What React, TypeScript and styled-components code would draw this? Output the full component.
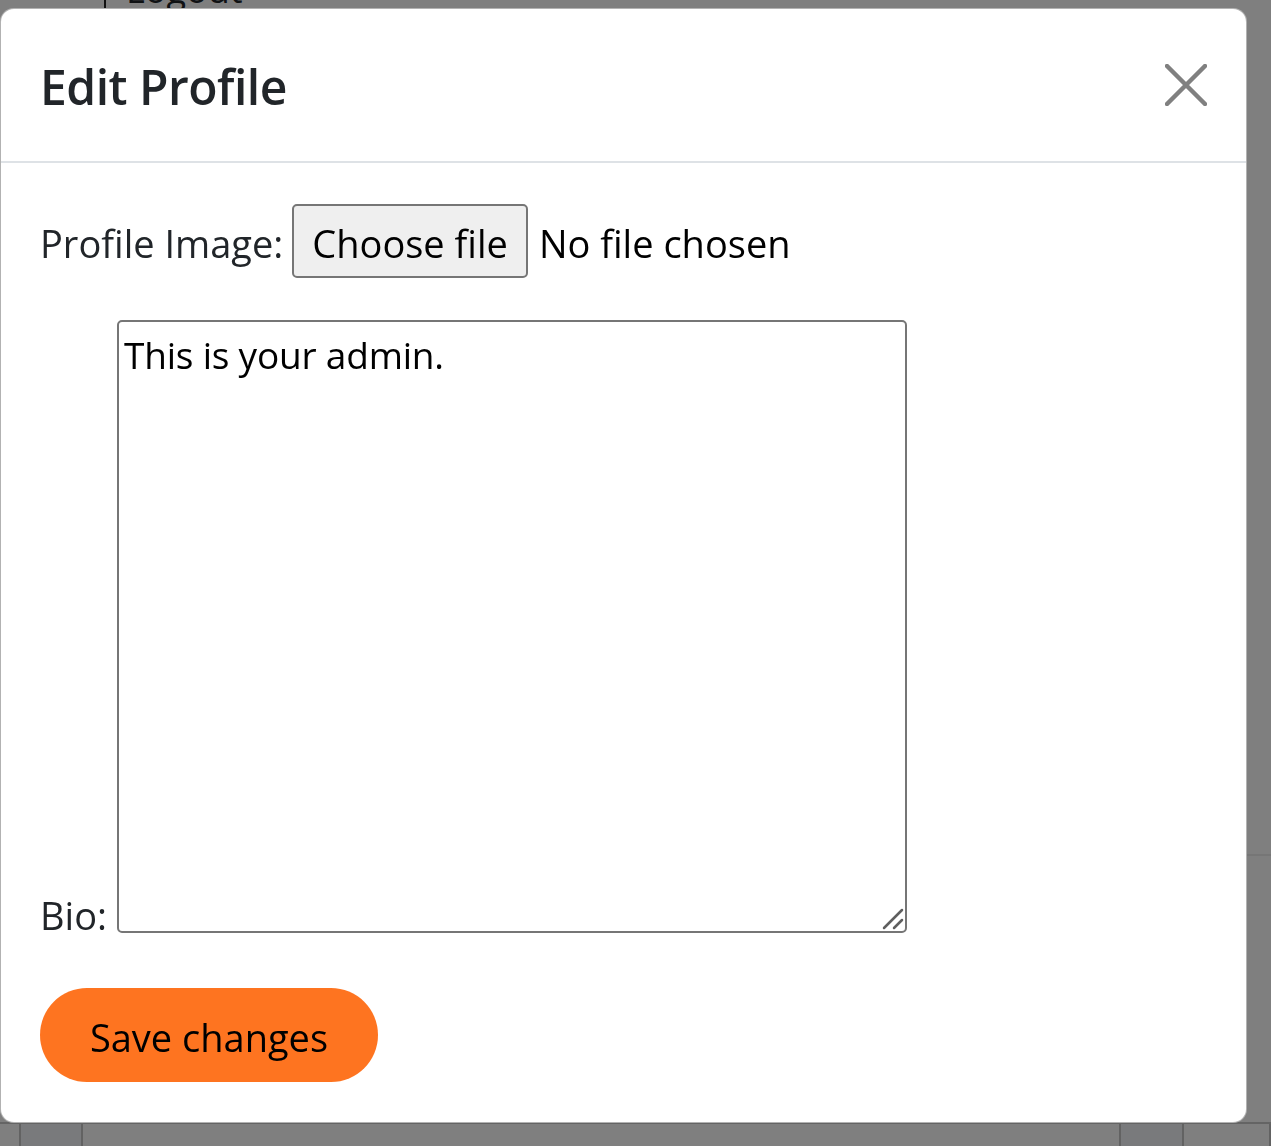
import styled, { createGlobalStyle } from 'styled-components';

const GlobalStyle = createGlobalStyle`
  html, body {
    margin: 0;
    padding: 0;
    background: #fff;
    overflow: hidden;
  }
  * {
    box-sizing: border-box;
  }
`;

const font = `"Open Sans", "Noto Sans", "Liberation Sans", sans-serif`;

// faux page behind the dialog
const Page = styled.div`
  height: 100vh;
  display: flex;
  flex-direction: column;
  justify-content: space-between;
  font-family: ${font};
  color: #212529;
`;

const TopBar = styled.div`
  display: flex;
  height: 9px;
  overflow: hidden;
`;

const TopCell = styled.div<{ width: number }>`
  width: ${p => p.width}px;
  border-right: 2px solid #222;
  line-height: 0;
`;

const LogoutText = styled.div`
  padding-left: 20px;
  font-size: 36px;
  line-height: 10px;
  margin-top: -15px;
`;

const BottomBar = styled.div`
  display: flex;
  height: 24px;
  border-top: 2px solid #c8c8c8;
`;

const BottomCell = styled.div<{ width: number; shade?: boolean }>`
  width: ${p => p.width}px;
  border-right: 2px solid #c4c4c4;
  background: ${p => (p.shade ? '#f3f5f8' : '#fff')};
`;

const Backdrop = styled.div`
  position: fixed;
  inset: 0;
  background: rgba(0, 0, 0, 0.5);
  padding-top: 8px;
`;

const SideRule = styled.div`
  position: absolute;
  right: 0;
  top: 854px;
  width: 26px;
  height: 2px;
  background: #767676;
`;

const Dialog = styled.div`
  position: relative;
  width: 1247px;
  height: 1115px;
  background: #fff;
  border: 1px solid rgba(0, 0, 0, 0.3);
  border-radius: 14px;
  display: flex;
  flex-direction: column;
  font-family: ${font};
  color: #212529;
`;

const Header = styled.div`
  height: 155px;
  display: flex;
  align-items: center;
  justify-content: space-between;
  padding: 0 38px 0 39px;
  border-bottom: 2px solid #dee2e6;
`;

const Title = styled.h5`
  margin: 0;
  font-size: 48px;
  font-weight: 600;
  letter-spacing: -0.5px;
  line-height: 1.5;
  padding-top: 4px;
`;

const CloseButton = styled.button`
  width: 44px;
  height: 44px;
  padding: 0;
  border: none;
  background: transparent;
  display: flex;
  align-items: center;
  justify-content: center;
  cursor: pointer;
`;

const Body = styled.form`
  padding: 41px 39px 40px;
  display: flex;
  flex-direction: column;
  gap: 42px;
  font-size: 38px;
`;

const FieldRow = styled.div`
  display: flex;
  align-items: center;
`;

const Label = styled.label`
  line-height: 1.5;
  margin-right: 9px;
  padding-top: 4px;
`;

const FileButton = styled.span`
  display: inline-flex;
  align-items: center;
  height: 74px;
  padding: 4px 18px 0 18px;
  background: #efefef;
  border: 2px solid #767676;
  border-radius: 5px;
  color: #000;
  margin-right: 11px;
`;

const FileName = styled.span`
  color: #000;
  padding-top: 4px;
`;

const BioRow = styled.div`
  display: flex;
  align-items: flex-end;
`;

const BioLabel = styled.label`
  line-height: 1;
  margin-right: 10px;
  margin-bottom: -1px;
`;

const TextAreaWrap = styled.div`
  position: relative;
  width: 790px;
  height: 613px;
`;

const TextArea = styled.textarea`
  width: 100%;
  height: 100%;
  resize: none;
  border: 2px solid #767676;
  border-radius: 5px;
  padding: 11px 5px;
  font-family: ${font};
  font-size: 37px;
  line-height: 1.2;
  letter-spacing: -0.2px;
  color: #000;
  outline: none;
`;

const Grip = styled.svg`
  position: absolute;
  right: 3px;
  bottom: 3px;
`;

const SaveButton = styled.button`
  align-self: flex-start;
  width: 338px;
  height: 94px;
  margin-top: 13px;
  padding-top: 4px;
  border: none;
  border-radius: 47px;
  background: #fe7420;
  color: #000;
  font-family: ${font};
  font-size: 38px;
  cursor: pointer;
`;

export default function App() {
  return (
    <>
      <GlobalStyle />
      <Page>
        <TopBar>
          <TopCell width={106} />
          <LogoutText>Logout</LogoutText>
        </TopBar>
        <BottomBar>
          <BottomCell width={21} />
          <BottomCell width={62} shade />
          <BottomCell width={1038} />
          <BottomCell width={63} shade />
          <BottomCell width={87} />
        </BottomBar>
      </Page>
      <Backdrop>
        <SideRule />
        <Dialog role="dialog">
          <Header>
            <Title>Edit Profile</Title>
            <CloseButton aria-label="Close">
              <svg width="42" height="42" viewBox="0 0 42 42">
                <path
                  d="M2 2 L40 40 M40 2 L2 40"
                  stroke="#808080"
                  strokeWidth="4.5"
                  strokeLinecap="round"
                />
              </svg>
            </CloseButton>
          </Header>
          <Body>
            <FieldRow>
              <Label>Profile Image:</Label>
              <FileButton>Choose file</FileButton>
              <FileName>No file chosen</FileName>
            </FieldRow>
            <BioRow>
              <BioLabel>Bio:</BioLabel>
              <TextAreaWrap>
                <TextArea defaultValue="This is your admin." />
                <Grip width="22" height="22" viewBox="0 0 22 22">
                  <path
                    d="M2 20 L20 2 M12 20 L20 12"
                    stroke="#5f5f5f"
                    strokeWidth="2.5"
                    strokeLinecap="round"
                  />
                </Grip>
              </TextAreaWrap>
            </BioRow>
            <SaveButton type="button">Save changes</SaveButton>
          </Body>
        </Dialog>
      </Backdrop>
    </>
  );
}
